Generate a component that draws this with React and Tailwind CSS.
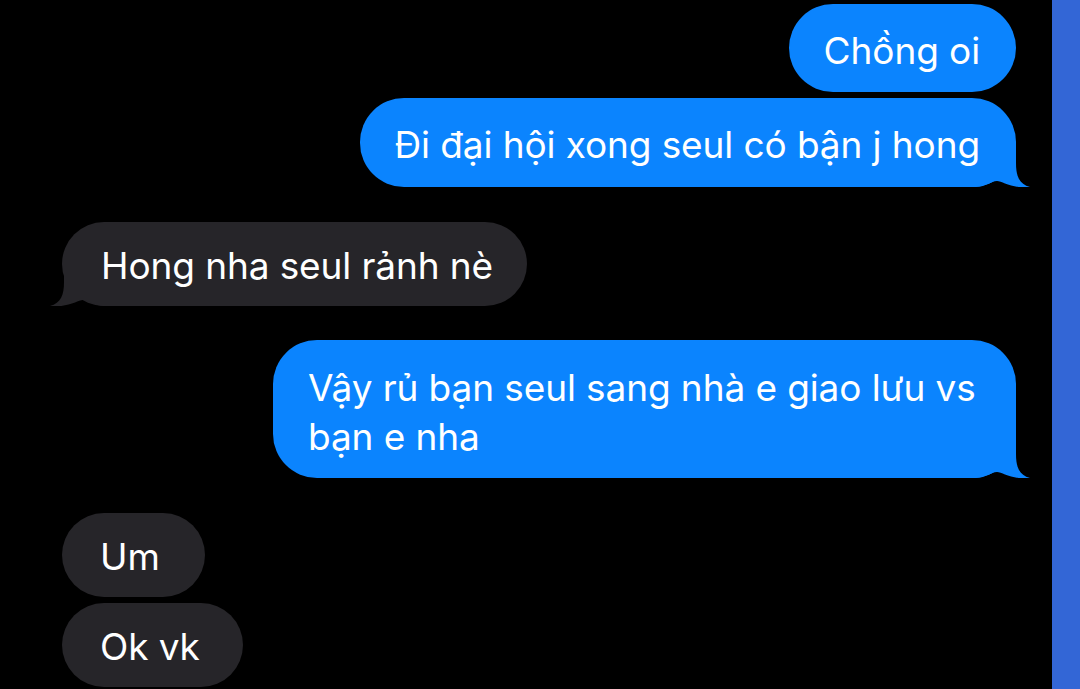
import React from "react";

function Tail({ color, side }) {
  const right = side === "right";
  return (
    <svg
      className={
        right
          ? "absolute bottom-0 right-[-14px] w-[58px] h-[44px]"
          : "absolute bottom-0 left-[-12px] w-[58px] h-[44px] -scale-x-100"
      }
      viewBox="0 0 58 44"
      preserveAspectRatio="none"
    >
      <path
        d="M0,0 L44,0 L44,20 C44,33 47,41 58,44 C50,45.5 40,43 33,40.5 C30,39 27,38 25,38 C19,38 14,44 4,44 L0,44 Z"
        fill={color}
      />
    </svg>
  );
}

function Bubble({ side, children, className = "" }) {
  const right = side === "right";
  const color = right ? "#0b84fe" : "#262529";
  return (
    <div
      className={
        "relative text-white text-[37px] leading-[49px] tracking-[-0.1px] " +
        (right ? "bg-[#0b84fe] " : "bg-[#262529] ") +
        className
      }
    >
      <span className="relative z-10">{children}</span>
      <Tail color={color} side={side} />
    </div>
  );
}

export default function App() {
  return (
    <div
      className="w-[1080px] h-[689px] bg-black flex overflow-hidden"
      style={{ fontFamily: "Inter, 'Noto Sans', sans-serif" }}
    >
      <div className="flex-1 flex flex-col pl-[62px] pr-[36px] pt-[4px]">
        <div className="flex justify-end">
          <div className="bg-[#0b84fe] text-white text-[37px] leading-[49px] tracking-[-0.1px] rounded-full h-[88px] pl-[35px] pr-[36px] pt-[22px]">
            Chồng oi
          </div>
        </div>
        <div className="flex justify-end mt-[6px]">
          <Bubble side="right" className="rounded-[44px] h-[89px] pl-[34px] pr-[36px] pt-[22px]">
            Đi đại hội xong seul có bận j hong
          </Bubble>
        </div>
        <div className="flex justify-start mt-[35px]">
          <Bubble side="left" className="rounded-[42px] h-[84px] pl-[39px] pr-[34px] pt-[19px]">
            Hong nha seul rảnh nè
          </Bubble>
        </div>
        <div className="flex justify-end mt-[34px]">
          <Bubble side="right" className="rounded-[44px] h-[138px] w-[743px] pl-[35px] pr-[30px] pt-[23px]">
            Vậy rủ bạn seul sang nhà e giao lưu vs
            <br />
            bạn e nha
          </Bubble>
        </div>
        <div className="flex justify-start mt-[35px]">
          <div className="bg-[#262529] text-white text-[37px] leading-[49px] tracking-[-0.1px] rounded-full h-[84px] pl-[38px] pr-[45px] pt-[19px]">
            Um
          </div>
        </div>
        <div className="flex justify-start mt-[6px]">
          <div className="bg-[#262529] text-white text-[37px] leading-[49px] tracking-[-0.1px] rounded-full h-[84px] pl-[38px] pr-[43px] pt-[19px]">
            Ok vk
          </div>
        </div>
      </div>
      <div className="w-[28px] bg-[#3366d6]" />
    </div>
  );
}
